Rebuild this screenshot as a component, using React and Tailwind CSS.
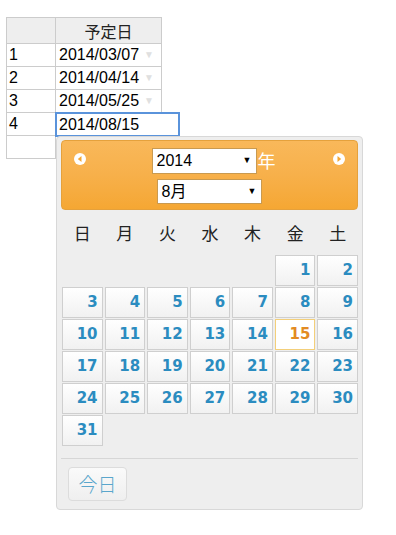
const rows = [
  { no: '1', date: '2014/03/07' },
  { no: '2', date: '2014/04/14' },
  { no: '3', date: '2014/05/25' },
]

const weekDays = ['日', '月', '火', '水', '木', '金', '土']

function CircleArrow({ dir }) {
  return (
    <svg width="12" height="12" viewBox="0 0 12 12">
      <circle cx="6" cy="6" r="6" fill="#fff" />
      {dir === 'left' ? <polygon points="7.5,3 3.8,6 7.5,9" fill="#f5a733" /> : <polygon points="4.5,3 8.2,6 4.5,9" fill="#f5a733" />}
    </svg>
  )
}

function DayCell({ day }) {
  if (!day) return <div className="h-[31px]" />
  const today = day === 15
  return (
    <div
      className={
        today
          ? 'h-[31px] border border-[#f3cf7a] bg-white flex items-center justify-end pr-[4px] text-[15px] font-bold text-[#e38b23]'
          : 'h-[31px] border border-[#cfcfcf] bg-linear-to-b from-white to-[#f1f1f1] flex items-center justify-end pr-[4px] text-[15px] font-bold text-[#2b8cc0]'
      }
    >
      {day}
    </div>
  )
}

export default function App() {
  const cells = [null, null, null, null, null]
  for (let d = 1; d <= 31; d++) cells.push(d)

  return (
    <div className="relative w-[396px] h-[535px] bg-white font-['Liberation_Sans','Noto_Sans_CJK_JP',sans-serif] text-black">
      <div className="pt-[17px] pl-[6px]">
        <table className="border-collapse text-[16px] leading-none">
          <tbody>
            <tr className="h-[26px] bg-[#eeeeee]">
              <td className="w-[49px] border border-[#cccccc]"></td>
              <td className="w-[106px] border border-[#cccccc] text-center text-[16px] text-[#222] font-['Noto_Sans_CJK_JP',sans-serif]">予定日</td>
            </tr>
            {rows.map((r) => (
              <tr key={r.no} className="h-[23px]">
                <td className="border border-[#cccccc] pl-[2px]">{r.no}</td>
                <td className="border border-[#cccccc] pl-[3px]">
                  <div className="flex items-center">
                    <span>{r.date}</span>
                    <span className="ml-[5px] text-[10px] text-[#e0e0e0]">▼</span>
                  </div>
                </td>
              </tr>
            ))}
            <tr className="h-[23px]">
              <td className="border border-[#cccccc] pl-[2px]">4</td>
              <td className="border border-[#cccccc]"></td>
            </tr>
            <tr className="h-[23px]">
              <td className="border border-[#cccccc]"></td>
              <td className="border border-[#cccccc]"></td>
            </tr>
          </tbody>
        </table>
      </div>

      <div className="absolute left-[55px] top-[112px] w-[125px] h-[25px] border-2 border-[#5a93db] bg-white flex items-center pl-[2px] text-[16px]">
        2014/08/15
      </div>

      <div className="absolute left-[56px] top-[136px] w-[307px] h-[374px] border border-[#d8d8d8] rounded-[4px] bg-[#eeeeee] p-[4px] pt-[3px] flex flex-col">
        <div className="h-[70px] rounded-[4px] border border-[#e5a13c] bg-linear-to-b from-[#f9b85a] via-[#f7b04a] to-[#f5a733] relative flex flex-col items-center pt-[6px]">
          <div className="absolute left-[12px] top-[12px]">
            <CircleArrow dir="left" />
          </div>
          <div className="absolute right-[12px] top-[12px]">
            <CircleArrow dir="right" />
          </div>
          <div className="flex items-center ml-[8px]">
            <div className="w-[105px] h-[26px] bg-white border border-[#c99a50] flex items-center justify-between pl-[4px] pr-[4px] text-[16px]">
              <span>2014</span>
              <span className="text-[9px]">▼</span>
            </div>
            <span className="text-[18px] text-white ml-[1px] font-['Noto_Sans_CJK_JP',sans-serif]">年</span>
          </div>
          <div className="w-[105px] h-[25px] mt-[5px] mr-[1px] bg-white border border-[#c99a50] flex items-center justify-between pl-[4px] pr-[4px] text-[16px]">
            <span>8月</span>
            <span className="text-[9px]">▼</span>
          </div>
        </div>

        <div className="h-[45px] grid grid-cols-7 w-[296px] ml-[1px] gap-x-[2px] items-center text-[17px] text-[#222] font-['Noto_Sans_CJK_JP',sans-serif]">
          {weekDays.map((w) => (
            <div key={w} className="text-center">{w}</div>
          ))}
        </div>

        <div className="grid grid-cols-7 w-[296px] ml-[1px] gap-x-[2px] gap-y-[1px] font-['DejaVu_Sans',sans-serif]">
          {cells.map((d, i) => (
            <DayCell key={i} day={d} />
          ))}
        </div>

        <div className="mt-[12px] border-t border-[#d6d6d6]" />
        <div className="pt-[8px] pl-[7px]">
          <div className="w-[59px] h-[34px] rounded-[4px] border border-[#dcdcdc] bg-linear-to-b from-[#fafafa] to-[#efefef] flex items-center justify-center text-[19px] text-[#5aa6cc] font-['Noto_Sans_CJK_JP',sans-serif] font-light">
            今日
          </div>
        </div>
      </div>
    </div>
  )
}
